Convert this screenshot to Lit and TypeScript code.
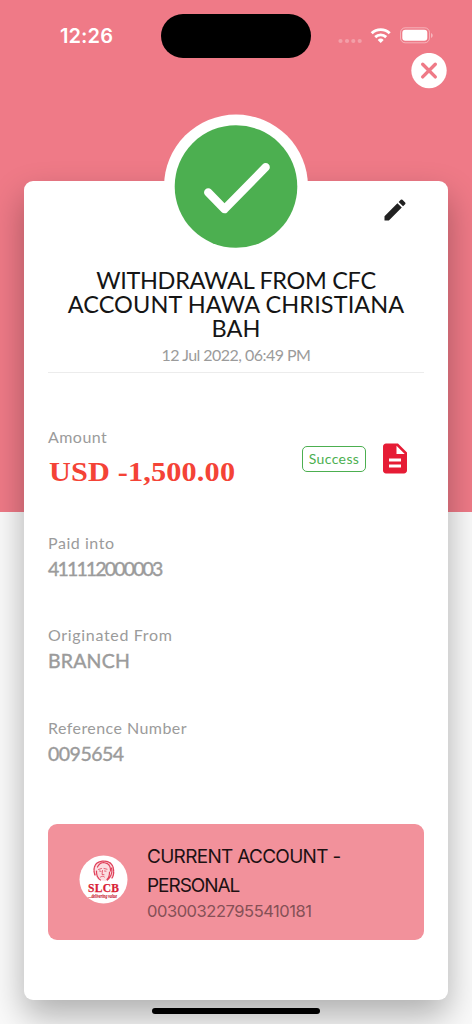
import { LitElement, html, css, svg } from "lit";
import { customElement, property } from "lit/decorators.js";

@customElement("status-bar")
class StatusBar extends LitElement {
  static styles = css`
    :host { display: flex; position: relative; height: 53px; color: #fff; }
    .time { margin: 23px 0 0 60px; width: 60px; font: 600 20px/26px Inter, sans-serif; letter-spacing: 0.1px; }
    .island { position: absolute; left: 161px; top: 14px; width: 150px; height: 44px; border-radius: 22px; background: #000; }
    .icons { margin: 26px 38px 0 auto; display: block; }
  `;
  render() {
    return html`
      <div class="time">12:26</div>
      <div class="island"></div>
      <svg class="icons" width="96" height="20" viewBox="338 26 96 20" fill="#fff">
        ${[340.5, 347, 353.3, 359.7].map((x) => svg`<circle cx=${x} cy="41" r="2.1" opacity=".28"/>`)}
        <g fill="none" stroke="#fff" stroke-width="2.9">
          <path d="M371.700 33.300a12.800 12.800 0 0 1 18 0"/>
          <path d="M375.200 37.100a8 8 0 0 1 11 0"/>
        </g>
        <path d="M377.700 39.900a4.600 4.600 0 0 1 6 0L380.700 43z"/>
        <rect x="400.500" y="27.800" width="29" height="15" rx="4.800" fill="none" stroke="#fff" stroke-opacity=".42"/>
        <rect x="402.300" y="29.800" width="25" height="11" rx="3"/>
        <path d="M431 33v5c1-.4 1.700-1.400 1.700-2.500S432 33.400 431 33z" opacity=".45"/>
      </svg>`;
  }
}

@customElement("detail-field")
class DetailField extends LitElement {
  @property() label = "";
  @property() value = "";
  @property() kind = "";
  static styles = css`
    :host { display: block; font-family: Lato, sans-serif; color: #9b9b9b; }
    .label { font-size: 16px; line-height: 20px; letter-spacing: var(--label-gap, 0.3px); white-space: nowrap; }
    .value { margin-top: 3px; font-size: 19.500px; line-height: 26px; font-weight: 400; letter-spacing: var(--value-gap, 0px); -webkit-text-stroke: 0.4px; white-space: nowrap; }
    .money { margin: 8px 0 0 1px; font: bold 27.500px/34px "Liberation Serif", serif; color: #f44336; -webkit-text-stroke: 0; transform: scaleX(1.1); transform-origin: left; }
  `;
  render() {
    return html`<div class="label">${this.label}</div>
      <div class="value ${this.kind}">${this.value}</div>`;
  }
}

@customElement("account-card")
class AccountCard extends LitElement {
  static styles = css`
    :host { display: flex; height: 116px; box-sizing: border-box; border-radius: 9px; background: #f2919b; padding: 18px 0 0 31px; font-family: Inter, sans-serif; }
    .logo { margin-top: 13px; width: 49px; height: 49px; flex: none; }
    .text { margin: 1px 0 0 19px; white-space: nowrap; }
    .name { font-size: 19px; line-height: 28.500px; color: #1d1113; }
    .first { letter-spacing: -0.7px; }
    .second { letter-spacing: -1.050px; }
    .number { margin-top: -1px; font-size: 16.500px; line-height: 24px; color: #855056; letter-spacing: -0.450px; }
  `;
  render() {
    return html`
      <svg class="logo" viewBox="0 0 49 49">
        <circle cx="24.500" cy="24.500" r="24" fill="#fff"/>
        <g fill="none" stroke="#e0405a" stroke-linecap="round">
          <path fill="#fbdde1" stroke="none" d="M17 9c4-4 12-4 15 0 3 4 3 9 1 13l-6 4-7-1c-5-4-6-11-3-16z"/>
          <path stroke-width="1.300" stroke-dasharray="1.800 .8" d="M16 20c-2-5-1-11 4-13 5-2 12-1 14 5 1 4 1 8-1 11"/>
          <path stroke-width="1.200" stroke-dasharray="1.500 .7" d="M18.500 12c2-4 5-5 8-4 4 1 5 4 5 8M32.500 13c1 4 0 8-4 12M17.500 16c0 4 1 7 4 9M30.500 17c0 4-1 6-3 8"/>
          <path stroke-width=".8" d="M19.500 14.500l3-1M25 13.500l3 .7M20.500 16l1.500.3M25.500 16l1.500.2M23.500 15.500l-.5 4 2 .2M21.500 22c1.500-1 3-1 4 0"/>
        </g>
        <text x="9" y="36.500" font-family="Liberation Serif, serif" font-weight="bold" font-size="11.500" textLength="31" fill="#d91f36" stroke="#d91f36" stroke-width=".25">SLCB</text>
        <text x="9.500" y="42.500" font-family="Liberation Serif, serif" font-weight="bold" font-style="italic" font-size="5.400" textLength="28.500" lengthAdjust="spacingAndGlyphs" fill="#c91f36" stroke="#c91f36" stroke-width=".12">...delivering value</text>
      </svg>
      <div class="text">
        <div class="name first">CURRENT ACCOUNT -</div>
        <div class="name second">PERSONAL</div>
        <div class="number">003003227955410181</div>
      </div>`;
  }
}

@customElement("app-root")
class AppRoot extends LitElement {
  static styles = css`
    :host { display: block; height: 1024px; overflow: hidden; position: relative; background: linear-gradient(#ef7a87 512px, #fafafa 512px); font-family: Lato, sans-serif; }
    .close { display: block; margin-left: 411px; width: 36px; height: 36px; }
    .card { box-sizing: border-box; margin: 92px 24px 0; height: 819px; border-radius: 9px; background: #fff; padding: 0 24px; box-shadow: 0 16px 34px rgba(0, 0, 0, 0.3); display: flex; flex-direction: column; }
    .top { display: grid; grid-template-columns: 1fr 146px 1fr; margin-top: -67px; height: 146px; }
    .badge { grid-column: 2; width: 146px; height: 146px; }
    .edit { grid-column: 3; margin: 82px 0 0 72px; width: 28px; height: 28px; }
    .title { margin-top: 8px; text-align: center; font-size: 23.500px; line-height: 24px; color: #151515; white-space: nowrap; }
    .line-a { letter-spacing: -0.330px; }
    .line-b { letter-spacing: 0.090px; }
    .line-c { letter-spacing: 0; }
    .date { margin-top: 5px; text-align: center; font-size: 16px; line-height: 20px; color: #9b9b9b; letter-spacing: -0.530px; }
    .rule { margin-top: 7px; height: 1px; background: #ececec; flex: none; }
    .amount { display: flex; margin-top: 54px; height: 62px; }
    .money { --value-gap: 0.150px; --label-gap: 0.450px; flex: 1; }
    .status { box-sizing: border-box; width: 64px; height: 26px; margin-top: 19px; border: 1.500px solid #4caf50; border-radius: 5px; color: #4caf50; font-size: 14px; line-height: 23px; text-align: center; letter-spacing: 0.4px; }
    .doc { margin: 14.500px 14px 0 14px; width: 30px; height: 33.500px; }
    .paid { margin-top: 44px; --value-gap: -1.850px; --label-gap: 0.550px; }
    .origin { margin-top: 43px; --label-gap: 0.670px; --value-gap: 0.2px; }
    .ref { margin-top: 44px; --label-gap: 0.440px; --value-gap: -0.5px; }
    .account { margin-top: 57px; flex: none; }
    .home { position: absolute; left: 152px; top: 1008px; width: 168px; height: 6px; border-radius: 3px; background: #000; }
  `;
  render() {
    return html`
      <status-bar></status-bar>
      <svg class="close" viewBox="0 0 36 36">
        <circle cx="18" cy="17.600" r="17.700" fill="#fff"/>
        <path d="M11.700 11.300l12.600 12.600M24.300 11.300L11.700 23.900" stroke="#ef7a87" stroke-width="3.400" stroke-linecap="round"/>
      </svg>
      <div class="card">
        <div class="top">
          <svg class="badge" viewBox="0 0 146 146">
            <circle cx="73" cy="72.500" r="72" fill="#fff"/>
            <circle cx="73" cy="72.500" r="61.300" fill="#4caf50"/>
            <path d="M45.200 78.400l16.300 16.800L102.700 53.200" fill="none" stroke="#fff" stroke-width="8.300" stroke-linecap="round" stroke-linejoin="round"/>
          </svg>
          <svg class="edit" viewBox="0 0 24 24" fill="#212121"><path d="M3 17.250V21h3.750L17.810 9.940l-3.750-3.750L3 17.250zM20.710 7.040a.996.996 0 0 0 0-1.410l-2.340-2.340a.996.996 0 0 0-1.410 0l-1.830 1.830 3.750 3.750 1.830-1.830z"/></svg>
        </div>
        <div class="title">
          <div class="line-a">WITHDRAWAL FROM CFC</div>
          <div class="line-b">ACCOUNT HAWA CHRISTIANA</div>
          <div class="line-c">BAH</div>
        </div>
        <div class="date">12 Jul 2022, 06:49 PM</div>
        <div class="rule"></div>
        <div class="amount">
          <detail-field class="money" label="Amount" value="USD -1,500.00" kind="money"></detail-field>
          <div class="status">Success</div>
          <svg class="doc" viewBox="2 1 20 22.350" fill="#e61c35"><path d="M14 2H6c-1.100 0-1.990.9-1.990 2L4 20c0 1.100.89 2 1.990 2H18c1.100 0 2-.9 2-2V8l-6-6zm2 16H8v-2h8v2zm0-4H8v-2h8v2zm-3-5V3.500L18.500 9H13z"/></svg>
        </div>
        <detail-field class="paid" label="Paid into" value="411112000003"></detail-field>
        <detail-field class="origin" label="Originated From" value="BRANCH"></detail-field>
        <detail-field class="ref" label="Reference Number" value="0095654"></detail-field>
        <account-card class="account"></account-card>
      </div>
      <div class="home"></div>`;
  }
}
